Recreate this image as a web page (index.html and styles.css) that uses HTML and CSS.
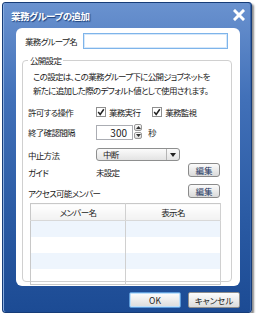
FILE: index.html
```html
<!DOCTYPE html>
<html lang="ja">
<head>
  <meta charset="UTF-8">
  <title>業務グループの追加</title>
  <link rel="stylesheet" href="styles.css">
</head>
<body>
  <div class="dialog">
    <div class="titlebar">
      <span class="title">業務グループの追加</span>
      <svg class="close" width="12" height="12" viewBox="0 0 12 12">
        <path d="M2 2 L10 10 M10 2 L2 10" stroke="#fff" stroke-width="3" stroke-linecap="square"/>
      </svg>
    </div>

    <div class="panel">
      <div class="name-row">
        <label for="groupName">業務グループ名</label>
        <input type="text" id="groupName" class="text-input">
      </div>

      <fieldset class="group">
        <legend>公開設定</legend>
        <p class="desc">この設定は、この業務グループ下に公開ジョブネットを<br>新たに追加した際のデフォルト値として使用されます。</p>

        <div class="row row-ops">
          <span class="label">許可する操作</span>
          <span class="check"><span class="box"><svg width="8" height="8" viewBox="0 0 8 8"><path d="M1.2 4 L3.2 6.4 L6.8 1.2" fill="none" stroke="#222" stroke-width="1.5"/></svg></span>業務実行</span>
          <span class="check"><span class="box"><svg width="8" height="8" viewBox="0 0 8 8"><path d="M1.2 4 L3.2 6.4 L6.8 1.2" fill="none" stroke="#222" stroke-width="1.5"/></svg></span>業務監視</span>
        </div>

        <div class="row row-interval">
          <span class="label">終了確認間隔</span>
          <span class="number">300</span>
          <span class="spinner">
            <span class="spin"><svg width="5" height="3" viewBox="0 0 5 3"><path d="M0 3 L2.5 0 L5 3Z" fill="#333"/></svg></span>
            <span class="spin"><svg width="5" height="3" viewBox="0 0 5 3"><path d="M0 0 L2.5 3 L5 0Z" fill="#333"/></svg></span>
          </span>
          <span class="unit">秒</span>
        </div>

        <div class="row row-stop">
          <span class="label">中止方法</span>
          <span class="select">
            <span class="select-value">中断</span>
            <span class="select-arrow"><svg width="6" height="4" viewBox="0 0 6 4"><path d="M0 0 L3 4 L6 0Z" fill="#222"/></svg></span>
          </span>
        </div>

        <div class="row row-guide">
          <span class="label low">ガイド</span>
          <span class="value low">未設定</span>
          <button class="edit">編集</button>
        </div>

        <div class="row row-members">
          <span class="label wide low">アクセス可能メンバー</span>
          <button class="edit">編集</button>
        </div>

        <table class="members">
          <thead>
            <tr><th>メンバー名</th><th>表示名</th></tr>
          </thead>
          <tbody>
            <tr class="alt"><td></td><td></td></tr>
            <tr><td></td><td></td></tr>
            <tr class="alt"><td></td><td></td></tr>
            <tr><td></td><td></td></tr>
          </tbody>
        </table>
      </fieldset>
    </div>

    <div class="footer">
      <button class="btn default">OK</button>
      <button class="btn">キャンセル</button>
    </div>
  </div>
</body>
</html>
```

FILE: styles.css
```css
body {
  margin: 0;
  padding: 0;
  background-color: #fff;
  font-family: "Noto Sans CJK JP", "Liberation Sans", sans-serif;
  font-size: 8.5px;
  font-feature-settings: "palt";
  letter-spacing: -0.7px;
  white-space: nowrap;
  color: #222;
}

.dialog {
  margin: 2px 0 0 2px;
  width: 248px;
  height: 309px;
  border: 1px solid #163c78;
  border-radius: 3px;
  background: linear-gradient(#6a92cf, #4271b9 30%, #2a5aa3 70%, #1c4b94);
  box-shadow: inset 1px 0 0 #8aaee0, inset -1px 0 0 #3a66aa, 2px 2px 2px rgba(0,0,0,0.45);
}

.titlebar {
  height: 25px;
  display: flex;
  align-items: center;
  justify-content: space-between;
  padding: 0 6px 0 8px;
}

.title {
  color: #fff;
  font-size: 9.5px;
  font-weight: bold;
  letter-spacing: -0.5px;
  text-shadow: 1px 1px 1px #1b3f78;
}

.close {
  margin-top: -2px;
}

.panel {
  margin: 0 11px 0 13px;
  height: 258px;
  background: #fff;
  border-radius: 6px;
  padding: 5px 8px 0 6px;
  box-sizing: border-box;
}

.name-row {
  display: flex;
  align-items: center;
  padding-left: 3px;
}

.name-row label {
  width: 58px;
  flex-shrink: 0;
}

.text-input {
  width: 145px;
  height: 16px;
  box-sizing: border-box;
  border: 1px solid #7eb4ea;
  box-shadow: inset 0 0 0 1px #d6e8fa;
  padding: 0 2px;
  margin: 0;
  outline: none;
}

.group {
  margin: 5px 0 0 0;
  padding: 0 11px 0 5px;
  min-width: 0;
  border: 1px solid #d0d0d0;
  border-radius: 4px;
  height: 228px;
  box-sizing: border-box;
}

.group legend {
  padding: 0 2px;
  margin-left: 0;
  line-height: 12px;
}

.desc {
  margin: 3px 0 0 5px;
  line-height: 14px;
}

.row {
  display: flex;
  align-items: center;
}

.label {
  width: 68px;
  flex-shrink: 0;
}

.low {
  padding-top: 5px;
}

.row-ops {
  margin-top: 9px;
  height: 12px;
}

.check {
  display: flex;
  align-items: center;
  margin-right: 12px;
}

.box {
  width: 8px;
  height: 8px;
  border: 1px solid #8f8f8f;
  background: #fff;
  margin: 0 3px 0 0;
  display: flex;
}

.row-interval {
  margin-top: 6px;
}

.number {
  width: 37px;
  height: 15px;
  box-sizing: border-box;
  border: 1px solid #abadb3;
  text-align: right;
  padding-right: 5px;
  line-height: 13px;
  font-size: 10px;
  letter-spacing: 0;
}

.spinner {
  display: flex;
  flex-direction: column;
  margin-left: 1px;
}

.spin {
  width: 8px;
  height: 7px;
  box-sizing: border-box;
  border: 1px solid #9a9a9a;
  border-radius: 2px;
  background: linear-gradient(#fafafa, #dcdcdc);
  display: flex;
  align-items: center;
  justify-content: center;
  margin-bottom: 1px;
}

.unit {
  margin-left: 6px;
}

.row-stop {
  margin-top: 8px;
}

.select {
  width: 84px;
  height: 13px;
  box-sizing: border-box;
  border: 1px solid #8e8f8f;
  border-radius: 3px;
  background: linear-gradient(#fbfbfb, #e3e3e3);
  display: flex;
  align-items: center;
}

.select-value {
  flex: 1;
  padding-left: 6px;
  line-height: 11px;
}

.select-arrow {
  width: 12px;
  height: 11px;
  border-left: 1px solid #b5b5b5;
  display: flex;
  align-items: center;
  justify-content: center;
}

.value {
  flex: 1;
}

.label.wide {
  flex: 1;
}

.edit {
  width: 32px;
  height: 14px;
  padding: 0;
  margin: 0;
  border: 1px solid #8a8a8a;
  border-radius: 3px;
  background: linear-gradient(#fbfbfb, #dadada);
  font-family: inherit;
  font-size: 8.5px;
  font-feature-settings: "palt";
  color: #1d3560;
  line-height: 12px;
}

.row-guide {
  margin-top: 0;
}

.row-members {
  margin-top: 4px;
}

.members {
  margin: 4px 0 0 2px;
  width: 191px;
  border-collapse: collapse;
  border: 1px solid #c8c8c8;
  table-layout: fixed;
}

.members th {
  height: 16px;
  padding: 0;
  font-weight: normal;
  background: linear-gradient(#fff, #f1f1f1);
  border-right: 1px solid #d0d0d0;
  border-bottom: 1px solid #d8d8d8;
}

.members td {
  height: 16px;
  padding: 0;
  border-right: 1px solid #d0d0d0;
  box-sizing: border-box;
}

.members tr.alt td {
  background: #eef5fd;
}

.footer {
  display: flex;
  justify-content: flex-end;
  gap: 7px;
  padding: 6px 11px 0 0;
}

.btn {
  width: 52px;
  height: 16px;
  padding: 0;
  margin: 0;
  border: 1px solid #8f8f8f;
  border-radius: 2px;
  background: linear-gradient(#fdfdfd, #dcdcdc);
  font-family: inherit;
  font-size: 8.5px;
  font-feature-settings: "palt";
  color: #222;
}

.btn.default {
  border-color: #5d9ad8;
  box-shadow: inset 0 0 0 1px #bfe0fb;
}
```
